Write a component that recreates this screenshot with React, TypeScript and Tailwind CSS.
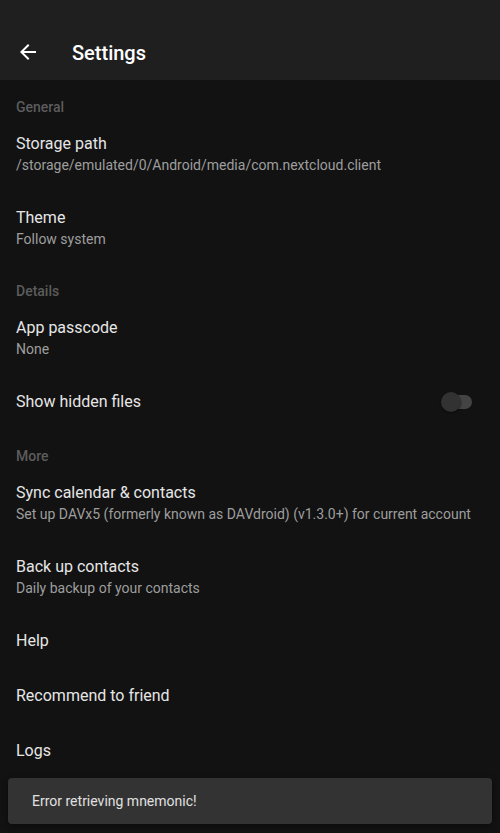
import React from "react";

const font = { fontFamily: "Roboto, 'Noto Sans', sans-serif" };

function Category({ label }: { label: string }) {
  return (
    <div className="pl-4 pt-4 h-[36px]">
      <div className="text-[14px] leading-[20px] font-medium text-[#5c5c5c]">{label}</div>
    </div>
  );
}

function Item({ title, sub }: { title: string; sub?: string }) {
  return (
    <div className={sub ? "px-4 pt-4 pb-4" : "px-4 pt-4 pb-[17px]"}>
      <div className="text-[16px] leading-[22px] text-[#e6e6e6]">{title}</div>
      {sub && <div className="text-[14px] leading-[20px] text-[#9e9e9e]">{sub}</div>}
    </div>
  );
}

export default function App() {
  return (
    <div className="w-[500px] h-[833px] bg-[#121212] relative overflow-hidden" style={font}>
      <div className="h-[80px] bg-[#1f1f1f] pt-[24px]">
        <div className="h-[56px] flex items-center">
          <div className="w-[72px] pl-4 flex items-center">
            <svg width="24" height="24" viewBox="0 0 24 24" fill="#ffffff">
              <path d="M20 11H7.83l5.59-5.59L12 4l-8 8 8 8 1.41-1.41L7.83 13H20v-2z" />
            </svg>
          </div>
          <div className="text-[20px] font-medium text-white leading-[28px] mt-[2px]">Settings</div>
        </div>
      </div>
      <div className="pt-[1px]">
        <Category label="General" />
        <Item title="Storage path" sub="/storage/emulated/0/Android/media/com.nextcloud.client" />
        <Item title="Theme" sub="Follow system" />
        <Category label="Details" />
        <Item title="App passcode" sub="None" />
        <div className="px-4 pt-4 pb-[17px] flex items-center justify-between">
          <div className="text-[16px] leading-[22px] text-[#e6e6e6]">Show hidden files</div>
          <div className="relative w-[32px] h-[22px] mr-[12px]">
            <div className="absolute left-[5px] top-[4px] w-[27px] h-[14px] rounded-full bg-[#444444]" />
            <div className="absolute left-[1px] top-[1px] w-[20px] h-[20px] rounded-full bg-[#323232] shadow-[0_1px_2px_rgba(0,0,0,0.5)]" />
          </div>
        </div>
        <Category label="More" />
        <Item title="Sync calendar & contacts" sub="Set up DAVx5 (formerly known as DAVdroid) (v1.3.0+) for current account" />
        <Item title="Back up contacts" sub="Daily backup of your contacts" />
        <Item title="Help" />
        <Item title="Recommend to friend" />
        <Item title="Logs" />
      </div>
      <div className="absolute left-[8px] right-[8px] top-[778px] h-[46px] rounded-[4px] bg-[#333333] flex items-center pl-[24px] shadow-[0_2px_6px_rgba(0,0,0,0.4)]">
        <span className="text-[14px] text-[#e0e0e0]">Error retrieving mnemonic!</span>
      </div>
    </div>
  );
}
